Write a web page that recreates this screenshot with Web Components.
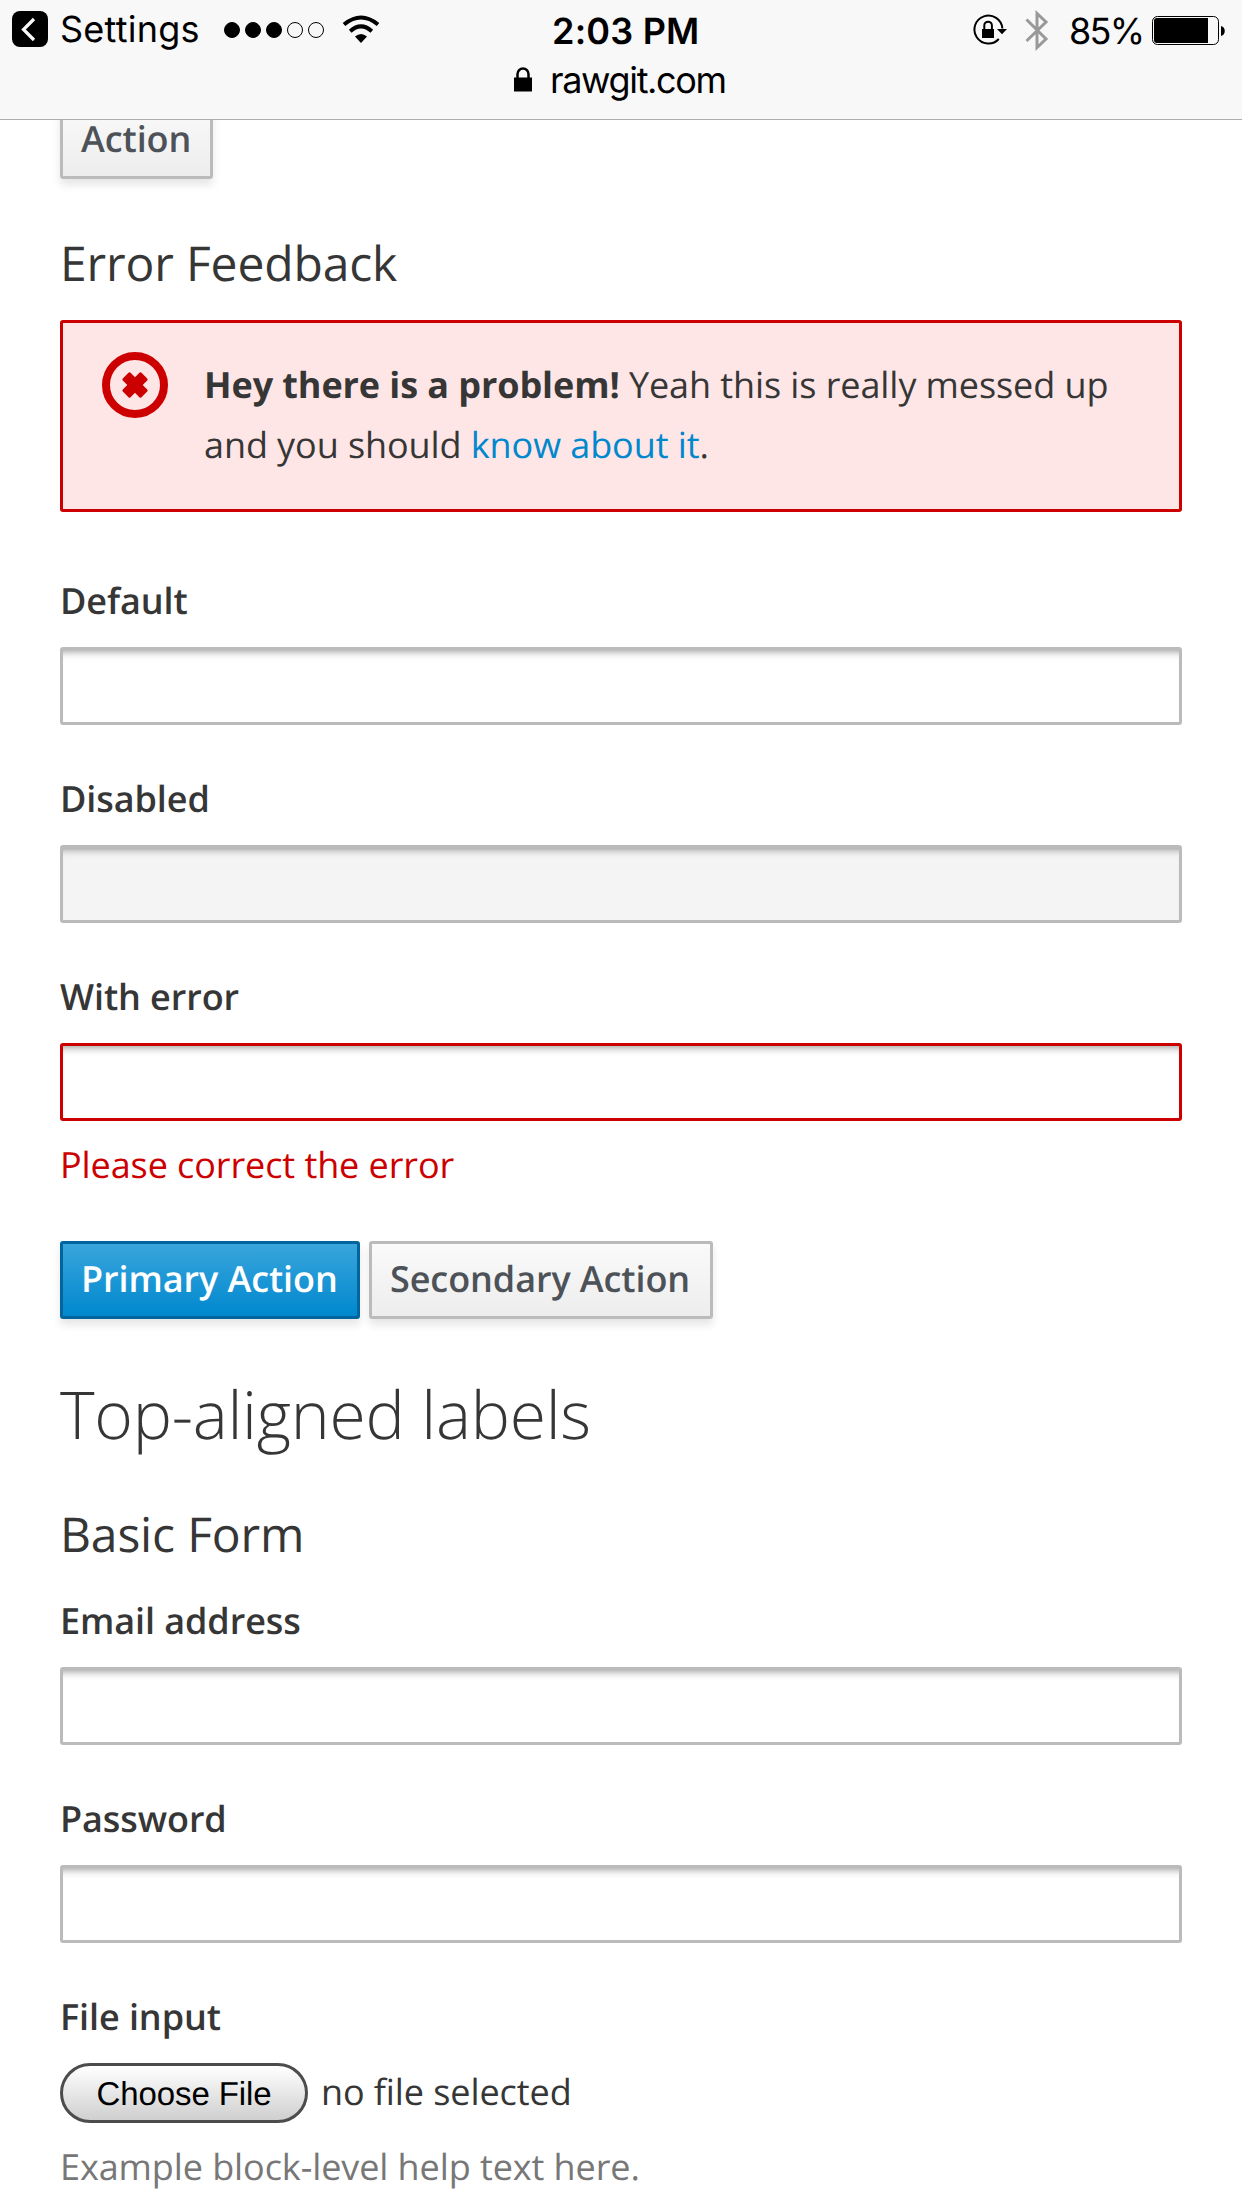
<!DOCTYPE html>
<html lang="en">
<head>
<meta charset="utf-8">
<title>Forms</title>
<style>
  html, body { margin: 0; }
  body { width: 1242px; height: 2208px; overflow: hidden; background: #fff; color: #363636;
    font: 400 36px/60px "Open Sans", "Liberation Sans", sans-serif; letter-spacing: -0.085px; text-rendering: geometricPrecision; }
</style>
</head>
<body>
<app-page></app-page>
<script>
const define = (name, html) => customElements.define(name, class extends HTMLElement {
  constructor() {
    super();
    this.attachShadow({ mode: 'open' }).innerHTML = html;
  }
});

define('status-bar', `
<style>
  :host { display: block; box-sizing: border-box; height: 120px; background: #f8f8f8; border-bottom: 1px solid #aeaeae;
    color: #000; font: 400 36px/44px Inter, "Liberation Sans", sans-serif; white-space: nowrap; position: relative; z-index: 1; }
  .row { display: grid; grid-template-columns: 552px 150px 1fr; height: 62px; }
  .side { display: flex; align-items: flex-start; }
  .right { justify-content: flex-end; padding-right: 16px; }
  svg { display: block; flex: none; }
  .back { margin: 11px 0 0 12px; }
  .settings { margin: 7px 0 0 12px; width: 141px; letter-spacing: 0.25px; }
  .dots { margin: 20px 0 0 21px; }
  .wifi { margin: 14px 0 0 16px; }
  .time { padding-top: 9px; font-weight: 600; letter-spacing: 0.2px; }
  .rot { margin-top: 14px; }
  .bt { margin: 10px 0 0 17px; }
  .pct { margin: 9px 0 0 19px; width: 82px; letter-spacing: -1.7px; }
  .bat { margin-top: 15px; }
  .url { display: flex; padding-left: 514px; }
  .url svg { margin-top: 4px; }
  .url span { margin: -4px 0 0 18px; letter-spacing: -1.35px; }
</style>
<div class="row">
  <div class="side">
    <svg class="back" width="36" height="36"><rect width="36" height="36" rx="8"/><path d="M22 8 11.500 18.500 22 29" fill="none" stroke="#f8f8f8" stroke-width="3.200"/></svg>
    <span class="settings">Settings</span>
    <svg class="dots" width="104" height="20"><g stroke="#000" stroke-width="1"><circle cx="10" cy="10" r="7.500"/><circle cx="31" cy="10" r="7.500"/><circle cx="52" cy="10" r="7.500"/><g fill="none"><circle cx="73" cy="10" r="7.500"/><circle cx="94" cy="10" r="7.500"/></g></g></svg>
    <svg class="wifi" width="38" height="30"><g fill="none" stroke="#000" stroke-width="4"><path d="M2 10.500Q19-3.500 36 10.500"/><path d="M8.200 17.300Q19 7.600 29.800 17.300"/></g><path d="M13 22.500Q19 17.500 25 22.500L19 29Z"/></svg>
  </div>
  <div class="time">2:03 PM</div>
  <div class="side right">
    <svg class="rot" width="36" height="32"><path d="M30.400 14.500A14 14 0 1 0 26.800 25" fill="none" stroke="#000" stroke-width="2"/><path d="M25 15h10l-5 5.300z"/><rect x="10" y="15" width="12" height="9"/><path d="M12.300 15v-3.500a3.800 3.800 0 0 1 7.600 0V15" fill="none" stroke="#000" stroke-width="2"/></svg>
    <svg class="bt" width="25" height="41"><path d="M1.500 9.500 21 29 12 37.500V3.500L21 12 1.500 31" fill="none" stroke="#999" stroke-width="3"/></svg>
    <span class="pct">85%</span>
    <svg class="bat" width="75" height="30"><rect x="1.500" y="1.500" width="66" height="28" rx="5" fill="none" stroke="#000"/><path d="M6 3h51v25H6a3 3 0 0 1-3-3V6a3 3 0 0 1 3-3zM70 11c5 1 5 9 0 10z"/></svg>
  </div>
</div>
<div class="url">
  <svg width="18" height="26"><rect y="11.500" width="18" height="14"/><path d="M3.500 13V8a5.500 5.500 0 0 1 11 0v5" fill="none" stroke="#000" stroke-width="2.500"/></svg>
  <span>rawgit.com</span>
</div>`);

define('pf-button', `
<style>
  :host { display: inline-block; box-sizing: border-box; width: fit-content; height: 78px; padding: 5px 18px; border: 3px solid #bbb; border-radius: 3px;
    background: linear-gradient(#fafafa, #ededed); color: #4d5258; font-weight: 600; white-space: nowrap;
    box-shadow: 0 6px 9px rgba(3,3,3,.1); }
  :host([primary]) { border-color: #00659c; background: linear-gradient(#39a5dc, #0088ce); color: #fff; }
</style><slot></slot>`);

define('pf-heading', `
<style>
  :host { display: block; font-size: 48px; line-height: 54px; letter-spacing: -0.15px; }
  :host([large]) { font-size: 66px; line-height: 72px; font-weight: 300; letter-spacing: -0.27px; }
</style><slot></slot>`);

define('pf-alert', `
<style>
  :host { display: flex; box-sizing: border-box; height: 192px; border: 3px solid #c00; border-radius: 3px; background: #ffe6e6; padding: 32px 60px 0 39px; }
  svg { flex: none; margin: -3px 36px 0 0; }
</style>
<svg width="66" height="66" viewBox="-33 -33 66 66"><circle r="29" fill="none" stroke="#c00" stroke-width="8"/><g fill="#c00"><rect x="-13.250" y="-5.500" width="26.500" height="11" rx="1.500" transform="rotate(45)"/><rect x="-13.250" y="-5.500" width="26.500" height="11" rx="1.500" transform="rotate(-45)"/></g></svg>
<div><slot></slot></div>`);

define('pf-field', `
<style>
  :host { display: block; height: 198px; }
  label { display: block; font-weight: 600; padding-top: 1px; }
  .box { box-sizing: border-box; height: 78px; margin-top: 16px; border: 3px solid #bbb; border-radius: 3px; background: #fff;
    box-shadow: inset 0 9px 8px -8px rgba(3,3,3,.45); }
  :host([disabled]) .box { background: #f4f4f4; }
  :host([error]) .box { border-color: #c00; }
</style>
<label><slot></slot></label><div class="box"></div><slot name="help"></slot>`);

define('pf-help', `
<style>:host { display: block; color: #72767b; } :host([error]) { color: #c00; }</style><slot></slot>`);

define('file-input', `
<style>
  :host { display: block; }
  label { display: block; font-weight: 600; padding-top: 1px; }
  .row { display: flex; margin-top: 16px; height: 60px; }
  .btn { box-sizing: border-box; width: 248px; border: 3px solid #4c4c4c; border-radius: 30px; background: linear-gradient(#fff, #cfcfcf);
    color: #000; text-align: center; font: 33px/56px "Liberation Sans", sans-serif; }
  .none { margin-left: 13px; line-height: 58px; }
</style>
<label>File input</label>
<div class="row"><div class="btn">Choose File</div><div class="none">no file selected</div></div>`);

define('app-page', `
<style>
  :host { display: block; }
  main { display: flex; flex-direction: column; padding: 0 60px; margin-top: -19px; }
  .actions { display: flex; gap: 9px; }
  .a { color: #0088ce; }
  .h1 { margin-top: 58px; }
  .al { margin: 29px 0 58px; }
  .t { margin-top: 59px; }
  .b { margin-top: 58px; }
  .e { margin-top: 28px; }
  .he { margin-top: 14px; }
  .hx { margin-top: 14px; color: #777; }
</style>
<status-bar></status-bar>
<main>
  <pf-button style="width:153px">Action</pf-button>
  <pf-heading class="h1">Error Feedback</pf-heading>
  <pf-alert class="al"><b>Hey there is a problem!</b> Yeah this is really messed up and you should <span class="a">know about it</span>.</pf-alert>
  <pf-field>Default</pf-field>
  <pf-field disabled>Disabled</pf-field>
  <pf-field error style="height:275px">With error<pf-help error slot="help" class="he">Please correct the error</pf-help></pf-field>
  <div class="actions"><pf-button primary style="width:300px">Primary Action</pf-button><pf-button style="width:344px">Secondary Action</pf-button></div>
  <pf-heading large class="t">Top-aligned labels</pf-heading>
  <pf-heading class="b">Basic Form</pf-heading>
  <pf-field class="e">Email address</pf-field>
  <pf-field>Password</pf-field>
  <file-input></file-input>
  <pf-help class="hx">Example block-level help text here.</pf-help>
</main>`);
</script>
</body>
</html>
